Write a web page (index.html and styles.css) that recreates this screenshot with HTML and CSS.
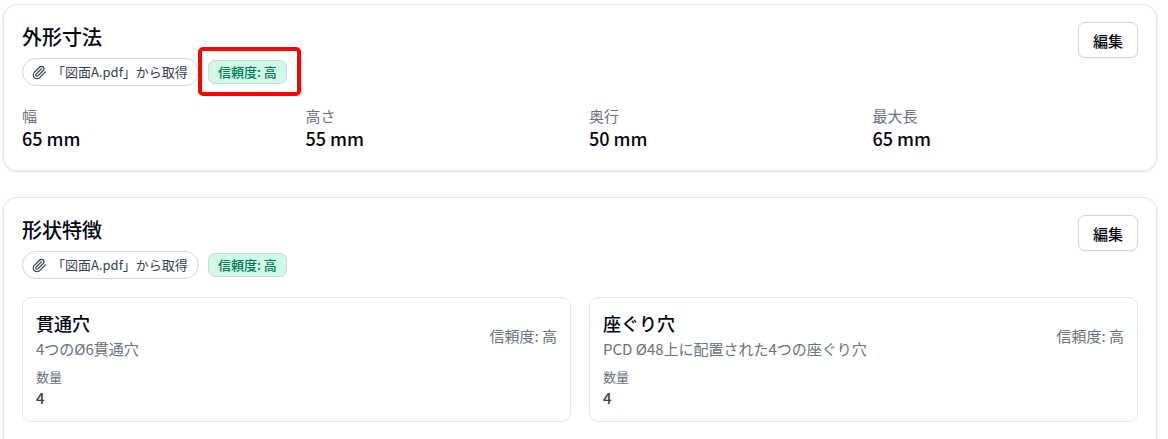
FILE: index.html
```html
<!DOCTYPE html>
<html lang="ja">
<head>
  <meta charset="UTF-8">
  <title>図面情報</title>
  <link rel="stylesheet" href="styles.css">
</head>
<body>

  <section class="card">
    <div class="card-header">
      <div>
        <h2 class="card-title">外形寸法</h2>
        <div class="tags">
          <span class="source">
            <svg class="clip" viewBox="0 0 24 24"><path d="m21.44 11.05-9.19 9.19a6 6 0 0 1-8.49-8.49l8.57-8.57A4 4 0 1 1 18 8.84l-8.59 8.57a2 2 0 0 1-2.83-2.83l8.49-8.48"/></svg>
            「図面A.pdf」から取得
          </span>
          <span class="badge highlighted">信頼度: 高</span>
        </div>
      </div>
      <button class="edit-btn" type="button">編集</button>
    </div>
    <dl class="sizes">
      <div>
        <dt>幅</dt>
        <dd>65 mm</dd>
      </div>
      <div>
        <dt>高さ</dt>
        <dd>55 mm</dd>
      </div>
      <div>
        <dt>奥行</dt>
        <dd>50 mm</dd>
      </div>
      <div>
        <dt>最大長</dt>
        <dd>65 mm</dd>
      </div>
    </dl>
  </section>

  <section class="card">
    <div class="card-header">
      <div>
        <h2 class="card-title">形状特徴</h2>
        <div class="tags">
          <span class="source">
            <svg class="clip" viewBox="0 0 24 24"><path d="m21.44 11.05-9.19 9.19a6 6 0 0 1-8.49-8.49l8.57-8.57A4 4 0 1 1 18 8.84l-8.59 8.57a2 2 0 0 1-2.83-2.83l8.49-8.48"/></svg>
            「図面A.pdf」から取得
          </span>
          <span class="badge">信頼度: 高</span>
        </div>
      </div>
      <button class="edit-btn" type="button">編集</button>
    </div>
    <div class="features">
      <article class="feature">
        <div class="feature-header">
          <div>
            <h3 class="feature-title">貫通穴</h3>
            <p class="feature-text">4つのØ6貫通穴</p>
          </div>
          <span class="confidence">信頼度: 高</span>
        </div>
        <dl class="quantity">
          <dt>数量</dt>
          <dd>4</dd>
        </dl>
      </article>
      <article class="feature">
        <div class="feature-header">
          <div>
            <h3 class="feature-title">座ぐり穴</h3>
            <p class="feature-text">PCD Ø48上に配置された4つの座ぐり穴</p>
          </div>
          <span class="confidence">信頼度: 高</span>
        </div>
        <dl class="quantity">
          <dt>数量</dt>
          <dd>4</dd>
        </dl>
      </article>
    </div>
  </section>

</body>
</html>
```
FILE: styles.css
```css
* {
  box-sizing: border-box;
}
body {
  margin: 0;
  padding: 4px 11px 0 3px;
  font-family: "Noto Sans CJK JP", sans-serif;
  font-size: 15px;
  line-height: 22px;
  color: #030712;
  background: #fff;
  overflow: hidden;
}
h2, h3, p, dl, dd {
  margin: 0;
}
.card {
  padding: 18px;
  margin-bottom: 26px;
  border: 1px solid #e5e7eb;
  border-radius: 14px;
  box-shadow: 0 1px 3px rgba(0, 0, 0, 0.08), 0 1px 2px rgba(0, 0, 0, 0.06);
}
.card-header {
  display: flex;
  justify-content: space-between;
  align-items: flex-start;
}
.card-title {
  font-size: 20px;
  line-height: 28px;
  font-weight: 500;
}
.tags {
  display: flex;
  align-items: center;
  gap: 9px;
  margin-top: 7px;
}
.source {
  display: flex;
  align-items: center;
  gap: 5px;
  height: 28px;
  padding: 0 10px 0 9px;
  border: 1px solid #d1d5dc;
  border-radius: 14px;
  font-size: 13px;
  color: #364153;
}
.clip {
  width: 15px;
  height: 15px;
  fill: none;
  stroke: #364153;
  stroke-width: 2;
  stroke-linecap: round;
  stroke-linejoin: round;
}
.badge {
  position: relative;
  padding: 0 9px;
  border: 1px solid #d1d5dc;
  border-radius: 7px;
  font-size: 13px;
  font-weight: 500;
  color: #007a55;
  background: #d0fae5;
}
.highlighted::after {
  content: "";
  position: absolute;
  inset: -14px -15px -13px -11px;
  border: 4px solid #f00;
  border-radius: 5px;
}
.edit-btn {
  height: 36px;
  padding: 0 14px;
  margin-top: -1px;
  border: 1px solid #d1d5dc;
  border-radius: 7px;
  font-family: inherit;
  font-size: 15px;
  font-weight: 500;
  color: #030712;
  background: #fff;
  box-shadow: 0 1px 2px rgba(0, 0, 0, 0.05);
  cursor: pointer;
}
.sizes {
  display: grid;
  grid-template-columns: repeat(4, 1fr);
  gap: 18px;
  margin-top: 19px;
}
.sizes dt {
  color: #6a7282;
}
.sizes dd {
  padding-bottom: 2px;
  font-size: 18px;
  line-height: 23px;
  font-weight: 500;
}
.features {
  display: grid;
  grid-template-columns: repeat(2, 1fr);
  gap: 18px;
  margin: 18px 0;
}
.feature {
  padding: 13px;
  border: 1px solid #e5e7eb;
  border-radius: 9px;
}
.feature-header {
  display: flex;
  justify-content: space-between;
  align-items: center;
}
.feature-title {
  margin-bottom: 3px;
  font-size: 18px;
  line-height: 24px;
  font-weight: 500;
}
.feature-text,
.confidence {
  color: #6a7282;
}
.quantity {
  margin-top: 6px;
}
.quantity dt {
  font-size: 13px;
  color: #6a7282;
}
.quantity dd {
  line-height: 20px;
  font-weight: 500;
  color: #364153;
}
```
